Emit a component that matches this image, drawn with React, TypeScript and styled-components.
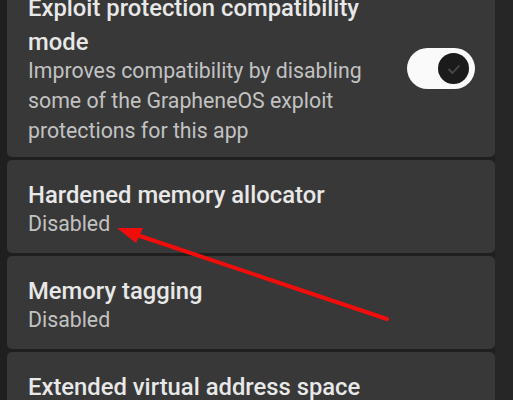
import React from "react";
import styled, { createGlobalStyle } from "styled-components";

const Global = createGlobalStyle`
  html, body {
    margin: 0;
    padding: 0;
    background: #1f1f1f;
    overflow: hidden;
  }
  body {
    font-family: Roboto, "Noto Sans", "Liberation Sans", sans-serif;
  }
`;

const Screen = styled.div`
  position: relative;
  width: 513px;
  height: 400px;
  overflow: hidden;
  display: flex;
  background: #1f1f1f;
`;

const List = styled.div`
  flex: 0 0 488px;
  padding-left: 7px;
  display: flex;
  flex-direction: column;
  gap: 3px;
  margin-top: -27px;
`;

const ScrollEdge = styled.div`
  flex: 1;
  background: #262626;
`;

const Card = styled.div<{ $pb?: number }>`
  background: #383838;
  border-radius: 5px;
  display: flex;
  align-items: center;
  gap: 12px;
  padding: 18px 20px ${(p) => p.$pb ?? 14}px 21px;
`;

const TextBlock = styled.div`
  flex: 1;
  min-width: 0;
  display: flex;
  flex-direction: column;
  white-space: nowrap;
`;

const Title = styled.div`
  color: #e8e8e8;
  font-size: 23.8px;
  font-weight: 500;
  line-height: 34px;
`;

const Summary = styled.div`
  color: #c2c2c2;
  font-size: 21.3px;
  font-weight: 400;
  line-height: 30px;
  margin-top: -3px;
`;

const Track = styled.div`
  flex: 0 0 auto;
  width: 68px;
  height: 41px;
  border-radius: 21px;
  background: #fafafa;
  display: flex;
  align-items: center;
  justify-content: flex-end;
  padding-right: 6px;
  box-sizing: border-box;
`;

const Thumb = styled.div`
  width: 31px;
  height: 31px;
  border-radius: 50%;
  background: #1b1b1b;
  display: flex;
  align-items: center;
  justify-content: center;
`;

const Annotation = styled.svg`
  position: absolute;
  left: 0;
  top: 0;
  pointer-events: none;
`;

function Switch() {
  return (
    <Track>
      <Thumb>
        <svg width="16" height="16" viewBox="0 0 16 16">
          <path d="M3 8.5 L6.5 12 L13 5" fill="none" stroke="#4a4a4a" strokeWidth="1.8" strokeLinecap="round" strokeLinejoin="round" />
        </svg>
      </Thumb>
    </Track>
  );
}

const items = [
  { title: "Hardened memory allocator", summary: "Disabled" },
  { title: "Memory tagging", summary: "Disabled" },
  { title: "Extended virtual address space", summary: "Disabled" },
];

export default function App() {
  return (
    <>
      <Global />
      <Screen>
        <List>
          <Card $pb={11}>
            <TextBlock>
              <Title>
                Exploit protection compatibility
                <br />
                mode
              </Title>
              <Summary>
                Improves compatibility by disabling
                <br />
                some of the GrapheneOS exploit
                <br />
                protections for this app
              </Summary>
            </TextBlock>
            <Switch />
          </Card>
          {items.map((it) => (
            <Card key={it.title}>
              <TextBlock>
                <Title>{it.title}</Title>
                <Summary>{it.summary}</Summary>
              </TextBlock>
            </Card>
          ))}
        </List>
        <ScrollEdge />
        <Annotation width="513" height="400" viewBox="0 0 513 400">
          <line x1="387" y1="319" x2="134" y2="234" stroke="#f20d0d" strokeWidth="4" strokeLinecap="round" />
          <polygon points="117,228 143,228 136,243" fill="#f20d0d" />
        </Annotation>
      </Screen>
    </>
  );
}
